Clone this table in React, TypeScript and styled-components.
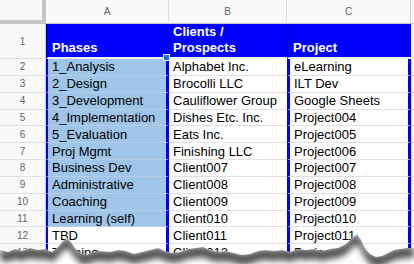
import { Fragment } from "react";
import styled, { createGlobalStyle, css } from "styled-components";

const GlobalStyle = createGlobalStyle`
    html, body {
        margin: 0;
        padding: 0;
        background: #ffffff;
    }
    * {
        box-sizing: border-box;
    }
`;

const BLUE = "#0000ff";
const GRID = "#e2e2e2";
const HEAD_LINE = "#c4c7c5";

const Page = styled.div`
    position: relative;
    width: 414px;
    height: 264px;
    overflow: hidden;
    background: #ffffff;
    font-family: "Liberation Sans", Arial, sans-serif;
`;

const Sheet = styled.div`
    display: grid;
    grid-template-columns: 46px 123px 118px 124px 1fr;
    grid-template-rows: 24px 35px repeat(12, 16.85px);
`;

const Corner = styled.div`
    background: #f8f9fa;
    border-right: 4px solid ${HEAD_LINE};
    border-bottom: 4px solid ${HEAD_LINE};
`;

const ColHeader = styled.div<{ $last?: boolean }>`
    display: flex;
    align-items: center;
    justify-content: center;
    background: #f8f9fa;
    color: #5f6368;
    font-size: 10px;
    border-bottom: 1px solid ${HEAD_LINE};
    border-right: 1px solid ${(p) => (p.$last ? "#d0d0d0" : "#dadce0")};
`;

const RowHeader = styled.div`
    display: flex;
    align-items: center;
    justify-content: center;
    background: #f8f9fa;
    color: #666666;
    font-size: 10px;
    border-right: 1px solid ${HEAD_LINE};
    border-bottom: 1px solid ${GRID};
`;

type Col = "a" | "b" | "c" | "d";

const Cell = styled.div<{ $col: Col; $sel?: boolean }>`
    display: flex;
    align-items: center;
    padding-left: 4px;
    white-space: nowrap;
    overflow: hidden;
    font-size: 13px;
    color: #000000;
    background: ${(p) => (p.$sel ? "#9fc5e8" : "#ffffff")};
    border-bottom: 1px solid ${(p) => (p.$sel ? "#b6cde3" : GRID)};
    ${(p) =>
        p.$col === "a" &&
        css`
            border-left: 2px solid ${BLUE};
            border-right: 3px solid ${BLUE};
        `}
    ${(p) =>
        p.$col === "c" &&
        css`
            border-left: 3px solid ${BLUE};
            border-right: 3px solid ${BLUE};
        `}
    ${(p) =>
        p.$col === "d" &&
        css`
            border-left: 1px solid #d6d6d6;
        `}
`;

const HeadCell = styled.div<{ $col: Col }>`
    display: flex;
    align-items: flex-end;
    padding: 0 0 1px 4px;
    background: ${(p) => (p.$col === "d" ? "#f4f4f4" : BLUE)};
    color: #ffffff;
    font-weight: bold;
    font-size: 13px;
    line-height: 16px;
    border-bottom: 2px solid #eeeeee;
    ${(p) =>
        (p.$col === "a" || p.$col === "c") &&
        css`
            border-left: 2px solid #0000d8;
        `}
    ${(p) =>
        p.$col === "a" &&
        css`
            border-right: 1px solid #0000d8;
        `}
`;

const FillHandle = styled.div`
    position: absolute;
    left: 163px;
    top: 54px;
    width: 7px;
    height: 7px;
    background: #1a73e8;
    border: 1px solid #ffffff;
`;

const Tear = styled.svg`
    position: absolute;
    left: 0;
    top: 220px;
    width: 414px;
    height: 44px;
`;

const rows: [string, string, string][] = [
    ["1_Analysis", "Alphabet Inc.", "eLearning"],
    ["2_Design", "Brocolli LLC", "ILT Dev"],
    ["3_Development", "Cauliflower Group", "Google Sheets"],
    ["4_Implementation", "Dishes Etc. Inc.", "Project004"],
    ["5_Evaluation", "Eats Inc.", "Project005"],
    ["Proj Mgmt", "Finishing LLC", "Project006"],
    ["Business Dev", "Client007", "Project007"],
    ["Administrative", "Client008", "Project008"],
    ["Coaching", "Client009", "Project009"],
    ["Learning (self)", "Client010", "Project010"],
    ["TBD", "Client011", "Project011"],
    ["Training", "Client012", "Project012"],
];

// torn paper edge, absolute page coords
const edge: [number, number][] = [
    [0, 250], [8, 252], [15, 249], [22, 251], [30, 248], [38, 250], [45, 249],
    [52, 252], [58, 247], [63, 241], [67, 238], [71, 242], [75, 248], [80, 253],
    [86, 255], [92, 252], [100, 251], [110, 252], [118, 250], [126, 251],
    [134, 254], [142, 252], [150, 250], [158, 248], [165, 251], [172, 253],
    [180, 252], [188, 249], [196, 248], [203, 247], [210, 250], [218, 252],
    [226, 251], [234, 253], [242, 255], [250, 254], [258, 251], [266, 250],
    [274, 251], [282, 250], [290, 252], [298, 249], [306, 250], [314, 249],
    [322, 251], [330, 249], [338, 248], [346, 244], [352, 238], [357, 234],
    [361, 240], [365, 248], [370, 254], [376, 257], [382, 256], [388, 253],
    [394, 250], [400, 249], [407, 248], [414, 248],
];

function TornEdge() {
    const pts = (dy: number) => edge.map(([x, y]) => `${x},${y - 220 + dy}`);
    const below = `M ${pts(0).join(" L ")} L 414,44 L 0,44 Z`;
    const band = `M ${pts(-1).join(" L ")} L ${pts(10).reverse().join(" L ")} Z`;
    return (
        <Tear viewBox="0 0 414 44">
            <defs>
                <clipPath id="under">
                    <path d={below} />
                </clipPath>
                <filter id="soft" x="-5%" y="-50%" width="110%" height="200%">
                    <feGaussianBlur stdDeviation="3" />
                </filter>
            </defs>
            <path d={below} fill="#ffffff" />
            <g clipPath="url(#under)">
                <path d={band} fill="#4f4f4f" filter="url(#soft)" />
            </g>
        </Tear>
    );
}

export default function App() {
    return (
        <>
            <GlobalStyle />
            <Page>
                <Sheet>
                    <Corner />
                    <ColHeader>A</ColHeader>
                    <ColHeader>B</ColHeader>
                    <ColHeader $last>C</ColHeader>
                    <ColHeader />

                    <RowHeader>1</RowHeader>
                    <HeadCell $col="a">Phases</HeadCell>
                    <HeadCell $col="b">
                        Clients /<br />
                        Prospects
                    </HeadCell>
                    <HeadCell $col="c">Project</HeadCell>
                    <HeadCell $col="d" />

                    {rows.map((r, i) => (
                        <Fragment key={i}>
                            <RowHeader>{i + 2}</RowHeader>
                            <Cell $col="a" $sel={i < 10}>
                                {r[0]}
                            </Cell>
                            <Cell $col="b">{r[1]}</Cell>
                            <Cell $col="c">{r[2]}</Cell>
                            <Cell $col="d" />
                        </Fragment>
                    ))}
                </Sheet>
                <FillHandle />
                <TornEdge />
            </Page>
        </>
    );
}
